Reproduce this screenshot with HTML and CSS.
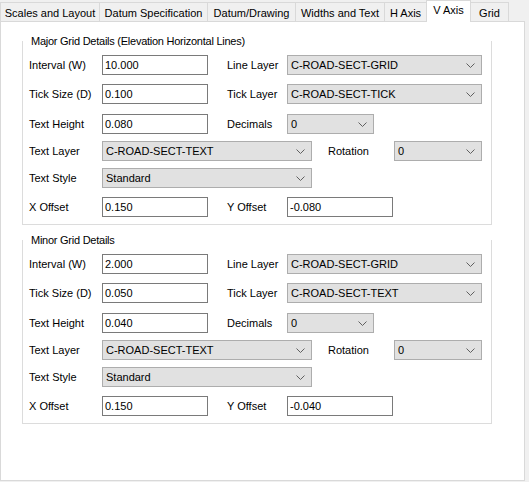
FILE: index.html
```html
<!DOCTYPE html>
<html>
<head>
<meta charset="utf-8">
<link rel="stylesheet" href="styles.css">
</head>
<body>
<div class="window">
  <div class="tabs">
    <div class="tab w1">Scales and Layout</div>
    <div class="tab w2">Datum Specification</div>
    <div class="tab w3">Datum/Drawing</div>
    <div class="tab w4">Widths and Text</div>
    <div class="tab w5">H Axis</div>
    <div class="tab w6 active">V Axis</div>
    <div class="tab w7">Grid</div>
  </div>
  <div class="panel">
    <fieldset class="group">
      <legend>Major Grid Details (Elevation Horizontal Lines)</legend>
      <div class="row g14">
        <span class="lbl">Interval (W)</span><span class="input">10.000</span>
        <span class="lbl2">Line Layer</span><span class="select wide">C-ROAD-SECT-GRID<svg class="chev" width="9" height="5" viewBox="0 0 9 5"><path d="M0.5 0.5 L4.5 4.5 L8.5 0.5" fill="none" stroke="#606060" stroke-width="1"/></svg></span>
      </div>
      <div class="row g9">
        <span class="lbl">Tick Size (D)</span><span class="input">0.100</span>
        <span class="lbl2">Tick Layer</span><span class="select wide">C-ROAD-SECT-TICK<svg class="chev" width="9" height="5" viewBox="0 0 9 5"><path d="M0.5 0.5 L4.5 4.5 L8.5 0.5" fill="none" stroke="#606060" stroke-width="1"/></svg></span>
      </div>
      <div class="row g10">
        <span class="lbl">Text Height</span><span class="input">0.080</span>
        <span class="lbl2">Decimals</span><span class="select dec">0<svg class="chev" width="9" height="5" viewBox="0 0 9 5"><path d="M0.5 0.5 L4.5 4.5 L8.5 0.5" fill="none" stroke="#606060" stroke-width="1"/></svg></span>
      </div>
      <div class="row g7">
        <span class="lbl">Text Layer</span><span class="select mid">C-ROAD-SECT-TEXT<svg class="chev" width="9" height="5" viewBox="0 0 9 5"><path d="M0.5 0.5 L4.5 4.5 L8.5 0.5" fill="none" stroke="#606060" stroke-width="1"/></svg></span>
        <span class="lbl3">Rotation</span><span class="select rot">0<svg class="chev" width="9" height="5" viewBox="0 0 9 5"><path d="M0.5 0.5 L4.5 4.5 L8.5 0.5" fill="none" stroke="#606060" stroke-width="1"/></svg></span>
      </div>
      <div class="row g7">
        <span class="lbl">Text Style</span><span class="select mid">Standard<svg class="chev" width="9" height="5" viewBox="0 0 9 5"><path d="M0.5 0.5 L4.5 4.5 L8.5 0.5" fill="none" stroke="#606060" stroke-width="1"/></svg></span>
      </div>
      <div class="row g9">
        <span class="lbl">X Offset</span><span class="input">0.150</span>
        <span class="lbl2">Y Offset</span><span class="input">-0.080</span>
      </div>
    </fieldset>
    <fieldset class="group second">
      <legend>Minor Grid Details</legend>
      <div class="row g14">
        <span class="lbl">Interval (W)</span><span class="input">2.000</span>
        <span class="lbl2">Line Layer</span><span class="select wide">C-ROAD-SECT-GRID<svg class="chev" width="9" height="5" viewBox="0 0 9 5"><path d="M0.5 0.5 L4.5 4.5 L8.5 0.5" fill="none" stroke="#606060" stroke-width="1"/></svg></span>
      </div>
      <div class="row g9">
        <span class="lbl">Tick Size (D)</span><span class="input">0.050</span>
        <span class="lbl2">Tick Layer</span><span class="select wide">C-ROAD-SECT-TEXT<svg class="chev" width="9" height="5" viewBox="0 0 9 5"><path d="M0.5 0.5 L4.5 4.5 L8.5 0.5" fill="none" stroke="#606060" stroke-width="1"/></svg></span>
      </div>
      <div class="row g10">
        <span class="lbl">Text Height</span><span class="input">0.040</span>
        <span class="lbl2">Decimals</span><span class="select dec">0<svg class="chev" width="9" height="5" viewBox="0 0 9 5"><path d="M0.5 0.5 L4.5 4.5 L8.5 0.5" fill="none" stroke="#606060" stroke-width="1"/></svg></span>
      </div>
      <div class="row g7">
        <span class="lbl">Text Layer</span><span class="select mid">C-ROAD-SECT-TEXT<svg class="chev" width="9" height="5" viewBox="0 0 9 5"><path d="M0.5 0.5 L4.5 4.5 L8.5 0.5" fill="none" stroke="#606060" stroke-width="1"/></svg></span>
        <span class="lbl3">Rotation</span><span class="select rot">0<svg class="chev" width="9" height="5" viewBox="0 0 9 5"><path d="M0.5 0.5 L4.5 4.5 L8.5 0.5" fill="none" stroke="#606060" stroke-width="1"/></svg></span>
      </div>
      <div class="row g7">
        <span class="lbl">Text Style</span><span class="select mid">Standard<svg class="chev" width="9" height="5" viewBox="0 0 9 5"><path d="M0.5 0.5 L4.5 4.5 L8.5 0.5" fill="none" stroke="#606060" stroke-width="1"/></svg></span>
      </div>
      <div class="row g9">
        <span class="lbl">X Offset</span><span class="input">0.150</span>
        <span class="lbl2">Y Offset</span><span class="input">-0.040</span>
      </div>
    </fieldset>
  </div>
</div>
</body>
</html>
```

FILE: styles.css
```css
html, body {
  margin: 0;
  padding: 0;
  background: #f0f0f0;
}
body {
  font-family: "Liberation Sans", Arial, sans-serif;
  font-size: 11px;
  color: #000;
}
.window {
  width: 529px;
  height: 482px;
  overflow: hidden;
}
.tabs {
  display: flex;
  height: 21px;
  align-items: flex-end;
  position: relative;
  z-index: 2;
}
.tab {
  box-sizing: border-box;
  height: 19px;
  border: 1px solid #d9d9d9;
  border-bottom: none;
  border-left: none;
  background: #f0f0f0;
  display: flex;
  align-items: center;
  justify-content: center;
  padding-top: 2px;
  white-space: nowrap;
}
.tab.w1 { width: 100px; border-left: 1px solid #d9d9d9; }
.tab.w2 { width: 108px; }
.tab.w3 { width: 88px; }
.tab.w4 { width: 89px; }
.tab.w5 { width: 42px; }
.tab.w6 { width: 44px; }
.tab.w7 { width: 38px; }
.tab.active {
  height: 22px;
  margin-bottom: -1px;
  background: #fff;
  border-left: 1px solid #d9d9d9;
  margin-left: -1px;
  width: 45px;
  padding-top: 0;
  padding-bottom: 3px;
}
.panel {
  box-sizing: border-box;
  width: 525px;
  height: 460px;
  background: #fff;
  border: 1px solid #d9d9d9;
  padding: 12px 0 0 21px;
}
.group {
  box-sizing: border-box;
  width: 470px;
  height: 191px;
  margin: 0;
  border: 1px solid #dcdcdc;
  border-top: none;
  padding: 0 6px;
  position: relative;
}
.group legend {
  display: block;
  padding: 0 2px;
  margin-left: 0;
  line-height: 14px;
  letter-spacing: -0.25px;
}
.group.second {
  margin-top: 8px;
}
.row {
  display: flex;
  align-items: center;
  height: 20px;
}
.g14 { margin-top: 7px; }
.g9 { margin-top: 9px; }
.g10 { margin-top: 10px; }
.g7 { margin-top: 7px; }
.lbl {
  width: 73px;
  white-space: nowrap;
}
.lbl2 {
  width: 60px;
  margin-left: 19px;
  white-space: nowrap;
}
.lbl3 {
  width: 66px;
  margin-left: 16px;
  white-space: nowrap;
}
.input {
  box-sizing: border-box;
  width: 106px;
  height: 20px;
  border: 1px solid #7a7a7a;
  background: #fff;
  padding-left: 2px;
  display: flex;
  align-items: center;
}
.select {
  box-sizing: border-box;
  height: 20px;
  border: 1px solid #adadad;
  background: #e1e1e1;
  padding-left: 3px;
  display: flex;
  align-items: center;
  position: relative;
}
.select.wide { width: 195px; }
.select.dec { width: 87px; }
.select.mid { width: 210px; }
.select.rot { width: 88px; }
.chev {
  position: absolute;
  right: 6px;
  top: 7px;
}
```
